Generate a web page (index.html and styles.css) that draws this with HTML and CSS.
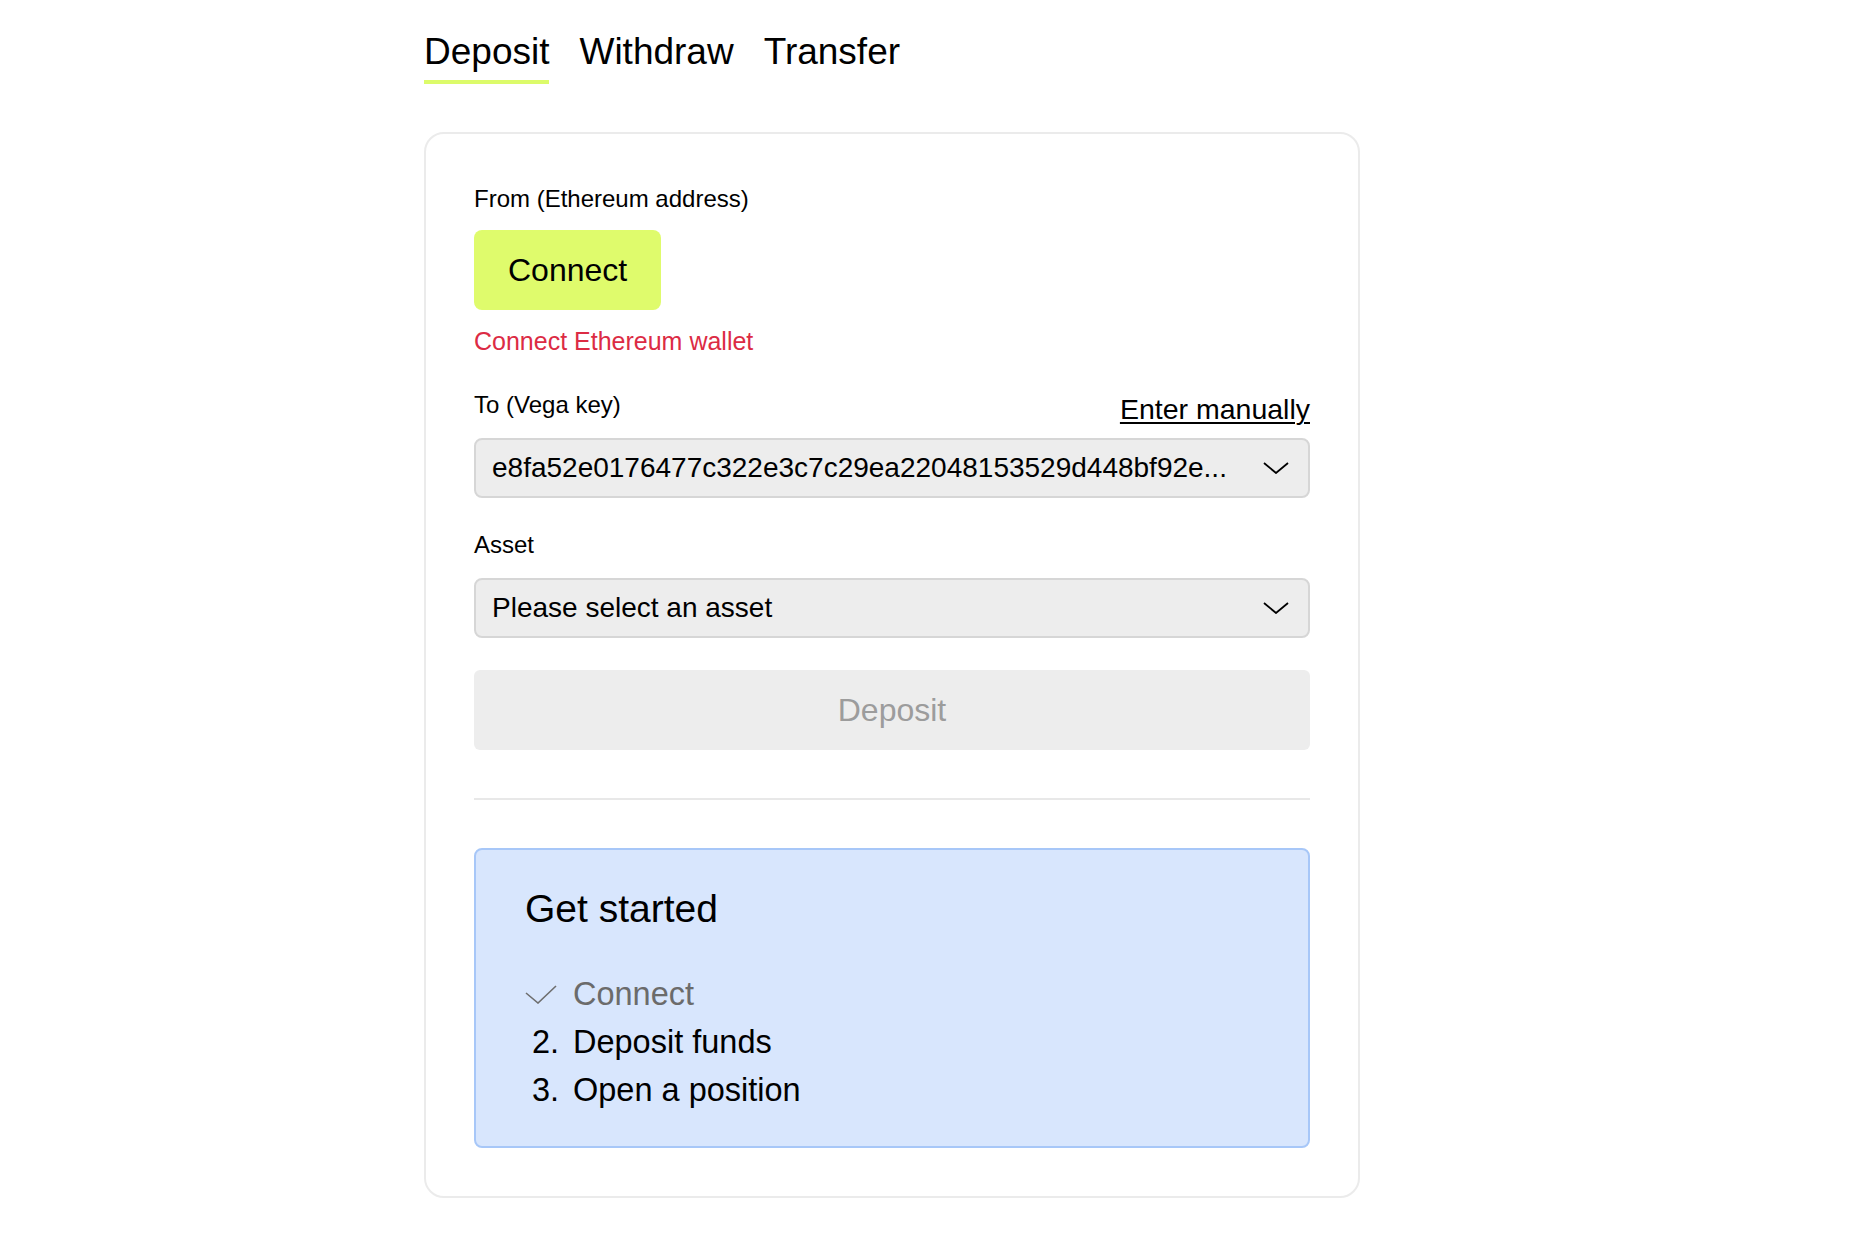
FILE: index.html
```html
<!DOCTYPE html>
<html lang="en">
<head>
<meta charset="utf-8">
<title>Deposit</title>
<link rel="stylesheet" href="styles.css">
</head>
<body>
<div class="page">
  <nav class="tabs">
    <a class="tab tab-active">Deposit</a>
    <a class="tab">Withdraw</a>
    <a class="tab">Transfer</a>
  </nav>

  <section class="card">
    <div class="field">
      <div class="label">From (Ethereum address)</div>
      <button class="btn-connect">Connect</button>
      <div class="error">Connect Ethereum wallet</div>
    </div>

    <div class="field field-to">
      <div class="label-row">
        <span class="label">To (Vega key)</span>
        <a class="link">Enter manually</a>
      </div>
      <div class="select">
        <span class="select-text">e8fa52e0176477c322e3c7c29ea22048153529d448bf92e...</span>
        <svg class="chevron" width="26" height="12" viewBox="0 0 26 12"><path d="M1 1 L13 11 L25 1" fill="none" stroke="#000" stroke-width="1.8"/></svg>
      </div>
    </div>

    <div class="field field-asset">
      <div class="label label-asset">Asset</div>
      <div class="select">
        <span class="select-text">Please select an asset</span>
        <svg class="chevron" width="26" height="12" viewBox="0 0 26 12"><path d="M1 1 L13 11 L25 1" fill="none" stroke="#000" stroke-width="1.8"/></svg>
      </div>
    </div>

    <button class="btn-deposit" disabled>Deposit</button>

    <hr class="divider">

    <div class="started">
      <h2 class="started-title">Get started</h2>
      <ol class="steps">
        <li class="step step-done">
          <span class="marker"><svg width="32" height="20" viewBox="0 0 32 20"><path d="M1 9 L13 19 L31 2" fill="none" stroke="#6e6e6e" stroke-width="1.6"/></svg></span>
          <span>Connect</span>
        </li>
        <li class="step"><span class="marker num">2.</span><span>Deposit funds</span></li>
        <li class="step"><span class="marker num">3.</span><span>Open a position</span></li>
      </ol>
    </div>
  </section>
</div>
</body>
</html>
```

FILE: styles.css
```css
* { box-sizing: border-box; }

html, body {
  margin: 0;
  padding: 0;
  background: #ffffff;
}

body {
  font-family: "Liberation Sans", Arial, sans-serif;
  color: #000;
}

.page {
  padding: 24px 0 40px 424px;
}

.tabs {
  display: flex;
  gap: 30px;
}

.tab {
  font-size: 37px;
  line-height: 56px;
  border-bottom: 4px solid transparent;
  color: #000;
}

.tab-active {
  border-bottom-color: #dcfb6a;
}

.card {
  margin-top: 48px;
  width: 936px;
  border: 2px solid #ebebeb;
  border-radius: 20px;
  padding: 48px;
}

.label {
  font-size: 24px;
  line-height: 33px;
}

.btn-connect {
  display: block;
  margin-top: 15px;
  height: 80px;
  padding: 0 34px;
  border: 0;
  border-radius: 8px;
  background: #dffb6c;
  font-family: inherit;
  font-size: 32px;
  color: #000;
}

.error {
  margin-top: 15px;
  font-size: 25px;
  line-height: 33px;
  color: #dc2b44;
}

.field-to {
  margin-top: 30px;
}

.label-row {
  display: flex;
  justify-content: space-between;
  align-items: flex-start;
  margin-bottom: 8px;
}

.link {
  font-size: 28.5px;
  line-height: 42px;
  text-decoration: underline;
  text-decoration-thickness: 2px;
  text-underline-offset: 3px;
  color: #000;
}

.select {
  display: flex;
  align-items: center;
  justify-content: space-between;
  height: 60px;
  padding: 0 19px 0 16px;
  background: #ededed;
  border: 2px solid #d6d6d6;
  border-radius: 8px;
}

.select-text {
  font-size: 28px;
  white-space: nowrap;
}

.chevron {
  display: block;
  flex: none;
}

.field-asset {
  margin-top: 30px;
}

.label-asset {
  margin-bottom: 17px;
}

.btn-deposit {
  display: block;
  width: 100%;
  margin-top: 32px;
  height: 80px;
  border: 0;
  border-radius: 6px;
  background: #ededed;
  font-family: inherit;
  font-size: 32px;
  color: #9c9c9c;
}

.divider {
  margin: 48px 0 0;
  border: 0;
  height: 2px;
  background: #e8e8e8;
}

.started {
  margin-top: 48px;
  background: #d8e6fd;
  border: 2px solid #a7c7f8;
  border-radius: 8px;
  padding: 32px 48px 32px 49px;
}

.started-title {
  margin: 0 0 34px;
  font-size: 39px;
  font-weight: normal;
  line-height: 54px;
}

.steps {
  list-style: none;
  margin: 0;
  padding: 0;
}

.step {
  display: flex;
  align-items: center;
  font-size: 32.5px;
  line-height: 48px;
}

.marker {
  width: 48px;
  flex: none;
  display: flex;
  align-items: center;
}

.num {
  padding-left: 7px;
}

.step-done {
  color: #6b6b6b;
}
```
